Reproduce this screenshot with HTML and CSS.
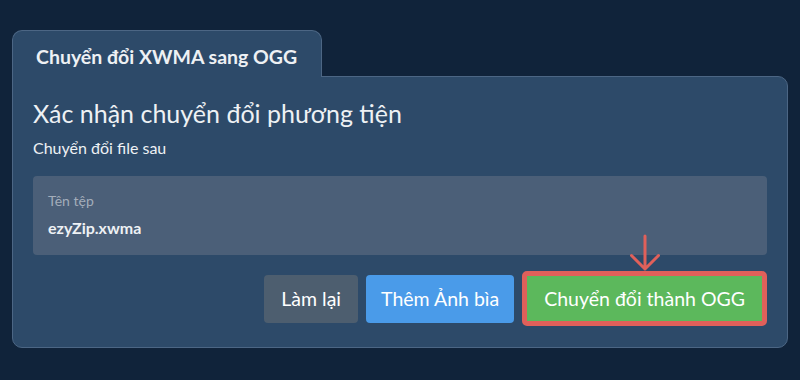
FILE: index.html
```html
<!DOCTYPE html>
<html lang="vi">
<head>
    <meta charset="UTF-8">
    <meta name="viewport" content="width=device-width, initial-scale=1.0">
    <title>Chuyển đổi XWMA sang OGG</title>
    <link rel="stylesheet" href="styles.css">
</head>
<body>
<div class="container">
    <div class="tab">Chuyển đổi XWMA sang OGG</div>
    <div class="card">
        <h2 class="card-title">Xác nhận chuyển đổi phương tiện</h2>
        <p class="card-sub">Chuyển đổi file sau</p>
        <div class="file-box">
            <div class="file-label">Tên tệp</div>
            <div class="file-name">ezyZip.xwma</div>
        </div>
        <div class="actions">
            <button class="btn btn-reset">Làm lại</button>
            <button class="btn btn-cover">Thêm Ảnh bìa</button>
            <button class="btn btn-convert">
                Chuyển đổi thành OGG
                <svg class="arrow" width="32" height="38" viewBox="0 0 32 38">
                    <path d="M16 2 V35 M2.5 21.5 L16 35 L29.5 21.5" fill="none" stroke="#e0605a" stroke-width="3" stroke-linecap="round" stroke-linejoin="round"/>
                </svg>
            </button>
        </div>
    </div>
</div>
</body>
</html>
```

FILE: styles.css
```css
html, body {
    margin: 0;
    height: 100%;
    background-color: #10233a;
    font-family: Lato, "Noto Sans", sans-serif;
    color: #eef1f4;
}
.container {
    padding: 30px 12px 0 12px;
}
.tab {
    display: inline-block;
    box-sizing: border-box;
    width: 310px;
    height: 47px;
    padding: 14px 0 0 23px;
    background-color: #2d4a69;
    border: 1px solid #4c6684;
    border-bottom: none;
    border-radius: 10px 10px 0 0;
    font-size: 19.5px;
    font-weight: 700;
    position: relative;
    z-index: 1;
}
.card {
    margin-top: -1px;
    box-sizing: border-box;
    width: 776px;
    height: 272px;
    padding: 20px 20px 0 20px;
    background-color: #2d4a69;
    border: 1px solid #4c6684;
    border-radius: 0 10px 10px 10px;
}
.card-title {
    margin: 0;
    font-size: 25px;
    font-weight: 400;
    line-height: 32px;
}
.card-sub {
    margin: 9px 0 0 0;
    font-size: 16px;
    line-height: 20px;
}
.file-box {
    margin-top: 18px;
    box-sizing: border-box;
    height: 79px;
    padding: 16px 15px 0 15px;
    background-color: #4b5f78;
    border-radius: 4px;
}
.file-label {
    font-size: 14px;
    line-height: 18px;
    color: #a3adba;
}
.file-name {
    margin-top: 8px;
    font-size: 16px;
    font-weight: 700;
    line-height: 20px;
}
.actions {
    display: flex;
    justify-content: flex-end;
    align-items: center;
    gap: 8px;
    margin-top: 16px;
}
.btn {
    height: 48px;
    padding: 0 16px;
    border: none;
    border-radius: 4px;
    font-family: Lato, "Noto Sans", sans-serif;
    font-size: 19.5px;
    color: #ffffff;
}
.btn-reset {
    padding: 0 17px;
    background-color: #4d5e6f;
}
.btn-cover {
    padding: 0 15px;
    background-color: #4a9be9;
}
.btn-convert {
    position: relative;
    height: 55px;
    padding: 0 17px;
    background-color: #5cb85c;
    border: 5px solid #e0605a;
    border-radius: 5px;
}
.arrow {
    position: absolute;
    top: -42px;
    left: 50%;
    margin-left: -16px;
}
```
